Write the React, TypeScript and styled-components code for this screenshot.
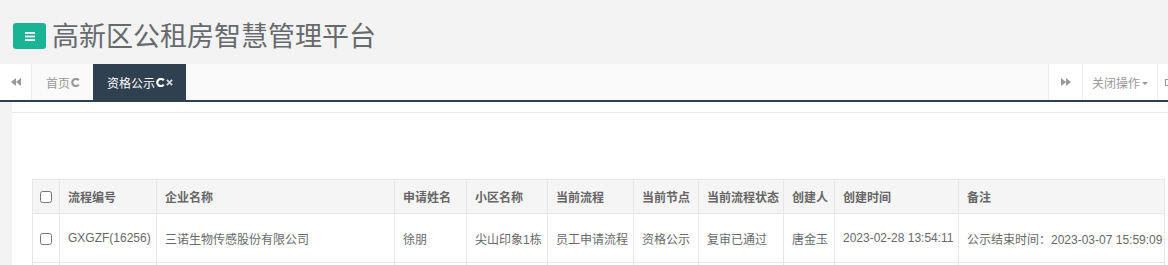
import React from 'react';
import styled, { createGlobalStyle } from 'styled-components';

const GlobalStyle = createGlobalStyle`
  html, body {
    margin: 0;
    padding: 0;
    background: #ffffff;
  }
  body {
    font-family: "Liberation Sans", "Noto Sans CJK SC", sans-serif;
    font-size: 12px;
    color: #676a6c;
  }
`;

interface Row {
  id: string;
  company: string;
  applicant: string;
  estate: string;
  flow: string;
  node: string;
  status: string;
  creator: string;
  createdAt: string;
  remark: string;
}

const columns: { title: string; width: number }[] = [
  { title: '', width: 27 },
  { title: '流程编号', width: 97 },
  { title: '企业名称', width: 238 },
  { title: '申请姓名', width: 72 },
  { title: '小区名称', width: 81 },
  { title: '当前流程', width: 86 },
  { title: '当前节点', width: 65 },
  { title: '当前流程状态', width: 85 },
  { title: '创建人', width: 51 },
  { title: '创建时间', width: 124 },
  { title: '备注', width: 206 },
];

const rows: Row[] = [
  {
    id: 'GXGZF(16256)',
    company: '三诺生物传感股份有限公司',
    applicant: '徐朋',
    estate: '尖山印象1栋',
    flow: '员工申请流程',
    node: '资格公示',
    status: '复审已通过',
    creator: '唐金玉',
    createdAt: '2023-02-28 13:54:11',
    remark: '公示结束时间：2023-03-07 15:59:09',
  },
];

const Page = styled.div`
  width: 1168px;
  height: 265px;
  overflow: hidden;
  background: #f3f3f4;
`;

const Header = styled.header`
  height: 64px;
  display: flex;
  align-items: center;
  padding-left: 13px;
  background: #f3f3f4;
`;

const MenuButton = styled.button`
  width: 33px;
  height: 26px;
  margin-top: 8px;
  border: none;
  border-radius: 3px;
  background: #1ab394;
  display: flex;
  align-items: center;
  justify-content: center;
  padding: 0;
`;

const Title = styled.h1`
  margin: 4px 0 0 6px;
  font-family: "Noto Sans CJK SC", sans-serif;
  font-size: 27px;
  font-weight: 400;
  line-height: 1;
  color: #676a6c;
`;

const TabBar = styled.nav`
  width: 1247px;
  height: 36px;
  display: flex;
  background: #fafafa;
  border-bottom: 2px solid #2f4050;
`;

const NavButton = styled.div<{ $width: number; $side: 'left' | 'right' }>`
  width: ${({ $width }) => $width}px;
  flex-shrink: 0;
  display: flex;
  align-items: center;
  justify-content: center;
  background: #fff;
  color: #999;
  ${({ $side }) =>
    $side === 'left' ? 'border-right: 1px solid #eee;' : 'border-left: 1px solid #eee;'}
`;

const ExitButton = styled.div`
  width: 82px;
  flex-shrink: 0;
  display: flex;
  align-items: center;
  padding-left: 7px;
  background: #fff;
  border-left: 1px solid #eee;
`;

const Tabs = styled.div`
  flex: 1;
  display: flex;
`;

const Tab = styled.div<{ $active?: boolean }>`
  display: flex;
  align-items: center;
  gap: 1px;
  padding: 0 13px 0 14px;
  font-size: 12px;
  color: ${({ $active }) => ($active ? '#ffffff' : '#999999')};
  background: ${({ $active }) => ($active ? '#2f4050' : 'transparent')};
  font-family: "Noto Sans CJK SC", sans-serif;
`;

const MenuLabel = styled.div`
  width: 74px;
  flex-shrink: 0;
  display: flex;
  align-items: center;
  justify-content: center;
  gap: 2px;
  background: #fff;
  color: #999;
  border-left: 1px solid #eee;
  font-family: "Noto Sans CJK SC", sans-serif;
`;

const Caret = styled.span`
  width: 0;
  height: 0;
  border-left: 3px solid transparent;
  border-right: 3px solid transparent;
  border-top: 3px solid #999;
  margin-top: 2px;
`;

const Content = styled.main`
  display: flex;
  padding-left: 12px;
  height: 200px;
`;

const Panel = styled.section`
  flex: 1;
  background: #fff;
  padding-top: 10px;
`;

const PanelBody = styled.div`
  border-top: 1px solid #e7eaec;
  padding: 66px 0 0 20px;
`;

const Table = styled.table`
  width: 1132px;
  table-layout: fixed;
  border-collapse: collapse;
  font-size: 12px;
  color: #676a6c;
`;

const HeadCell = styled.th`
  height: 34px;
  box-sizing: border-box;
  padding: 0 8px;
  text-align: left;
  font-weight: bold;
  color: #666;
  background: #f5f5f6;
  border: 1px solid #e7e7e7;
  white-space: nowrap;
  overflow: hidden;
`;

const Cell = styled.td`
  height: 49px;
  box-sizing: border-box;
  padding: 0 8px;
  text-align: left;
  vertical-align: middle;
  border: 1px solid #e7e7e7;
  white-space: nowrap;
  overflow: hidden;
`;

const CheckCell = styled(Cell)`
  padding: 0;
  text-align: center;
`;

const CheckHead = styled(HeadCell)`
  padding: 0;
  text-align: center;
`;

const Checkbox = styled.input.attrs({ type: 'checkbox' })`
  margin: 0;
  width: 12px;
  height: 12px;
  vertical-align: middle;
`;

const DoubleArrow = styled.svg<{ $flip?: boolean }>`
  transform: ${({ $flip }) => ($flip ? 'scaleX(-1)' : 'none')};
`;

const Backward = ({ flip }: { flip?: boolean }) => (
  <DoubleArrow $flip={flip} width="10" height="8" viewBox="0 0 10 8">
    <path d="M0 4 L5 0 V8 Z M5 4 L10 0 V8 Z" fill="#999" />
  </DoubleArrow>
);

const Refresh = ({ color }: { color: string }) => (
  <svg width="9" height="9" viewBox="0 0 10 10">
    <path d="M8.6 2.6 A4 4 0 1 0 8.6 7.4" fill="none" stroke={color} strokeWidth="2.4" />
  </svg>
);

const Close = () => (
  <svg width="7" height="7" viewBox="0 0 8 8">
    <path d="M1 1 L7 7 M7 1 L1 7" stroke="#d0d4d8" strokeWidth="2.2" />
  </svg>
);

const SignOut = () => (
  <svg width="10" height="9" viewBox="0 0 10 9">
    <path d="M0 1 H4 V2 H1 V7 H4 V8 H0 Z M5 2.5 H8 V1 L10 4.5 L8 8 V6.5 H5 Z" fill="#999" />
  </svg>
);

const HamburgerIcon = () => (
  <svg width="10" height="9" viewBox="0 0 10 9">
    <rect x="0" y="0" width="10" height="1.8" fill="#fff" />
    <rect x="0" y="3.6" width="10" height="1.8" fill="#fff" />
    <rect x="0" y="7.2" width="10" height="1.8" fill="#fff" />
  </svg>
);

export default function App() {
  return (
    <>
      <GlobalStyle />
      <Page>
        <Header>
          <MenuButton>
            <HamburgerIcon />
          </MenuButton>
          <Title>高新区公租房智慧管理平台</Title>
        </Header>
        <TabBar>
          <NavButton $width={31} $side="left">
            <Backward />
          </NavButton>
          <Tabs>
            <Tab>
              首页
              <Refresh color="#999" />
            </Tab>
            <Tab $active>
              资格公示
              <Refresh color="#fff" />
              <Close />
            </Tab>
          </Tabs>
          <NavButton $width={33} $side="right">
            <Backward flip />
          </NavButton>
          <MenuLabel>
            关闭操作
            <Caret />
          </MenuLabel>
          <ExitButton>
            <SignOut />
          </ExitButton>
        </TabBar>
        <Content>
          <Panel>
            <PanelBody>
              <Table>
                <colgroup>
                  {columns.map((c, i) => (
                    <col key={i} style={{ width: c.width }} />
                  ))}
                </colgroup>
                <thead>
                  <tr>
                    <CheckHead>
                      <Checkbox />
                    </CheckHead>
                    {columns.slice(1).map((c) => (
                      <HeadCell key={c.title}>{c.title}</HeadCell>
                    ))}
                  </tr>
                </thead>
                <tbody>
                  {rows.map((r) => (
                    <tr key={r.id}>
                      <CheckCell>
                        <Checkbox />
                      </CheckCell>
                      <Cell>{r.id}</Cell>
                      <Cell>{r.company}</Cell>
                      <Cell>{r.applicant}</Cell>
                      <Cell>{r.estate}</Cell>
                      <Cell>{r.flow}</Cell>
                      <Cell>{r.node}</Cell>
                      <Cell>{r.status}</Cell>
                      <Cell>{r.creator}</Cell>
                      <Cell>{r.createdAt}</Cell>
                      <Cell>{r.remark}</Cell>
                    </tr>
                  ))}
                  <tr>
                    {columns.map((c, i) => (
                      <Cell key={i} />
                    ))}
                  </tr>
                </tbody>
              </Table>
            </PanelBody>
          </Panel>
        </Content>
      </Page>
    </>
  );
}
